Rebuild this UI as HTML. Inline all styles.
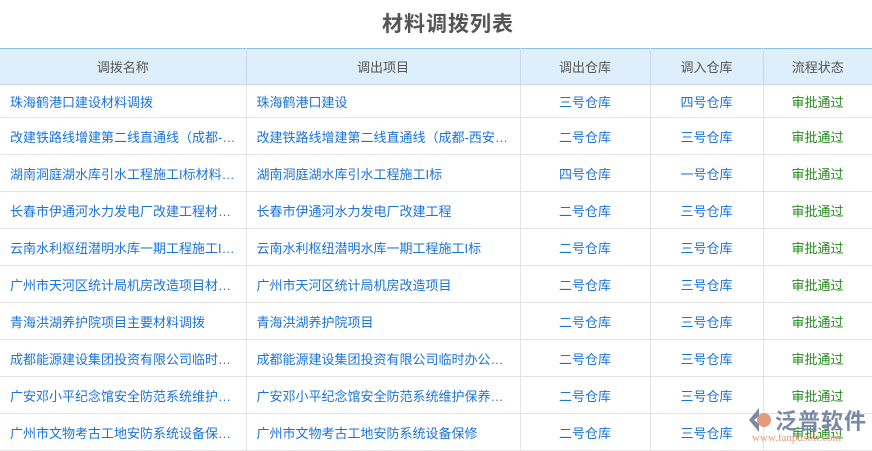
<!DOCTYPE html>
<html><head><meta charset="utf-8"><style>
body{margin:0;width:872px;height:450px;overflow:hidden;background:#fff;font-family:"Liberation Sans","Noto Sans CJK SC",sans-serif;position:relative}
h1{margin:0;position:absolute;top:8px;left:0;width:896px;text-align:center;font-size:21px;color:#555;font-weight:bold;letter-spacing:1px}
table{position:absolute;top:48px;left:0;border-collapse:collapse;table-layout:fixed;width:872px;font-size:13px}
th{background:#deeefb;color:#555;font-weight:normal;height:35px;padding:0;border-top:1px solid #8cc0ec;border-bottom:1px solid #c6dcee;border-right:1px solid #c6dcee}
td{height:36px;border-bottom:1px solid #e3e3e3;border-right:1px solid #e3e3e3;color:#1a73d9;white-space:nowrap;overflow:hidden;text-overflow:ellipsis;padding:0 10px}
td.c{text-align:center;padding:0}
td.g{color:#238a1a;text-align:center;padding:0}
tr.r1 td{height:32px}
.logo{position:absolute;left:775px;top:404px;font-size:22px;color:#7a8aa5;font-weight:bold;letter-spacing:1px;white-space:nowrap}
.url{position:absolute;left:752px;top:432px;font-size:11px;color:#e39a80;font-family:"Liberation Serif",serif;white-space:nowrap}
</style></head><body>
<h1>材料调拨列表</h1>
<table>
<colgroup><col style="width:246px"><col style="width:274px"><col style="width:130px"><col style="width:113px"><col style="width:109px"></colgroup>
<tr><th>调拨名称</th><th>调出项目</th><th>调出仓库</th><th>调入仓库</th><th style="border-right:0">流程状态</th></tr>
<tr class="r1"><td>珠海鹤港口建设材料调拨</td><td>珠海鹤港口建设</td><td class="c">三号仓库</td><td class="c">四号仓库</td><td class="g">审批通过</td></tr>
<tr><td>改建铁路线增建第二线直通线（成都-西安）材料调拨</td><td>改建铁路线增建第二线直通线（成都-西安）项目</td><td class="c">二号仓库</td><td class="c">三号仓库</td><td class="g">审批通过</td></tr>
<tr><td>湖南洞庭湖水库引水工程施工I标材料调拨</td><td>湖南洞庭湖水库引水工程施工I标</td><td class="c">四号仓库</td><td class="c">一号仓库</td><td class="g">审批通过</td></tr>
<tr><td>长春市伊通河水力发电厂改建工程材料调拨</td><td>长春市伊通河水力发电厂改建工程</td><td class="c">二号仓库</td><td class="c">三号仓库</td><td class="g">审批通过</td></tr>
<tr><td>云南水利枢纽潜明水库一期工程施工I标材料</td><td>云南水利枢纽潜明水库一期工程施工I标</td><td class="c">二号仓库</td><td class="c">三号仓库</td><td class="g">审批通过</td></tr>
<tr><td>广州市天河区统计局机房改造项目材料调拨</td><td>广州市天河区统计局机房改造项目</td><td class="c">二号仓库</td><td class="c">三号仓库</td><td class="g">审批通过</td></tr>
<tr><td>青海洪湖养护院项目主要材料调拨</td><td>青海洪湖养护院项目</td><td class="c">二号仓库</td><td class="c">三号仓库</td><td class="g">审批通过</td></tr>
<tr><td>成都能源建设集团投资有限公司临时办公</td><td>成都能源建设集团投资有限公司临时办公室建设</td><td class="c">二号仓库</td><td class="c">三号仓库</td><td class="g">审批通过</td></tr>
<tr><td>广安邓小平纪念馆安全防范系统维护保养材料</td><td>广安邓小平纪念馆安全防范系统维护保养项目</td><td class="c">二号仓库</td><td class="c">三号仓库</td><td class="g">审批通过</td></tr>
<tr><td>广州市文物考古工地安防系统设备保修材料</td><td>广州市文物考古工地安防系统设备保修</td><td class="c">二号仓库</td><td class="c">三号仓库</td><td class="g">审批通过</td></tr>
</table>
<svg style="position:absolute;left:745px;top:406px" width="28" height="28"><path d="M14 2 L4 14 L14 26 L14 18 L9 14 L14 10Z" fill="#7a8aa5"/><circle cx="19" cy="14" r="7" fill="#e39a80"/></svg>
<div class="logo">泛普软件</div>
<div class="url">www.fanpusoft.com</div>
</body></html>
